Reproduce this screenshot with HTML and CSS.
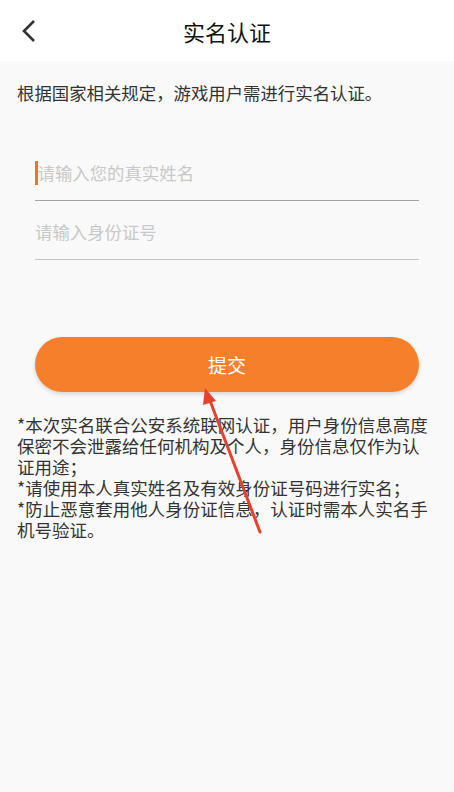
FILE: index.html
```html
<!DOCTYPE html>
<html lang="zh-CN">
<head>
    <meta charset="UTF-8">
    <meta name="viewport" content="width=device-width, initial-scale=1.0">
    <title>实名认证</title>
    <link rel="stylesheet" href="styles.css">
</head>
<body>

<div class="header">
    <a class="back" href="#">
        <svg width="16" height="24" viewBox="0 0 16 24">
            <path d="M14 2 L4 12 L14 22" fill="none" stroke="#333" stroke-width="2.6"/>
        </svg>
    </a>
    <h1>实名认证</h1>
</div>

<div class="content">
    <p class="intro">根据国家相关规定，游戏用户需进行实名认证。</p>

    <div class="field focused">
        <span class="caret"></span>
        <input type="text" placeholder="请输入您的真实姓名">
    </div>
    <div class="field">
        <input type="text" placeholder="请输入身份证号">
    </div>

    <button class="submit">提交</button>

    <p class="notes">
        *本次实名联合公安系统联网认证，用户身份信息高度<br>
        保密不会泄露给任何机构及个人，身份信息仅作为认<br>
        证用途；<br>
        *请使用本人真实姓名及有效身份证号码进行实名；<br>
        *防止恶意套用他人身份证信息，认证时需本人实名手<br>
        机号验证。
    </p>
</div>

<!-- annotation arrow over the page -->
<svg class="arrow" width="454" height="792" viewBox="0 0 454 792">
    <line x1="260" y1="532" x2="209" y2="398" stroke="#e6412d" stroke-width="3" stroke-linecap="round"/>
    <polygon points="205,388 216,401 203,405" fill="#e6412d"/>
</svg>

</body>
</html>
```

FILE: styles.css
```css
body {
    margin: 0;
    background-color: #f9f9f9;
    font-family: "Noto Sans CJK SC", "Noto Sans", sans-serif;
    color: #333;
    position: relative;
    min-height: 792px;
}
.header {
    height: 61px;
    background-color: #fff;
    display: flex;
    align-items: center;
    justify-content: center;
    position: relative;
}
.header h1 {
    margin: 0;
    font-size: 22px;
    font-weight: normal;
    color: #111;
}
.back {
    position: absolute;
    left: 20px;
    top: 19px;
    display: flex;
}
.content {
    padding: 20px 17px 0 17px;
}
.intro {
    margin: 0;
    font-size: 17.4px;
    line-height: 24px;
    color: #333;
}
.field {
    display: flex;
    align-items: center;
    margin: 0 18px;
    height: 59px;
    padding-top: 4px;
    box-sizing: border-box;
    border-bottom: 1px solid #c4c4c4;
}
.field.focused {
    margin-top: 37px;
    border-bottom-color: #a2a2a2;
}
.caret {
    width: 2.5px;
    height: 24px;
    background-color: #f0752a;
}
.field input {
    flex: 1;
    border: none;
    outline: none;
    background: transparent;
    padding: 0;
    font-family: inherit;
    font-size: 17.4px;
    line-height: 24px;
    color: #333;
}
.field input::placeholder {
    color: #c8c8c8;
}
.submit {
    display: block;
    width: calc(100% - 36px);
    margin: 77px 18px 0 18px;
    height: 55px;
    border: none;
    border-radius: 28px;
    background-color: #f57f2b;
    color: #fff;
    font-family: inherit;
    font-size: 19px;
    box-shadow: 0 2px 4px rgba(0, 0, 0, 0.15);
}
.notes {
    margin: 22px 0 0 0;
    font-size: 17.5px;
    line-height: 21px;
    color: #333;
}
.arrow {
    position: absolute;
    left: 0;
    top: 0;
    pointer-events: none;
}
```
